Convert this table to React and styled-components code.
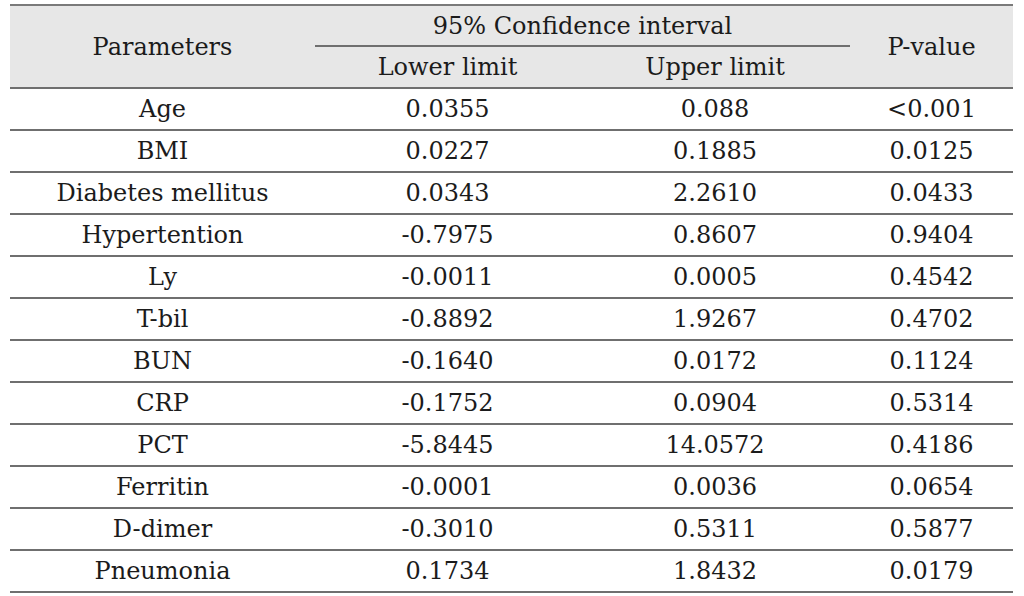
import styled, { createGlobalStyle } from "styled-components";

const GlobalStyle = createGlobalStyle`
  html, body {
    margin: 0;
    padding: 0;
    background: #ffffff;
  }
`;

const Page = styled.div`
  padding: 4px 11px 0 10px;
  font-family: "DejaVu Serif", "Liberation Serif", serif;
  color: #1b1b1b;
`;

const Table = styled.table`
  width: 1003px;
  border-collapse: collapse;
  table-layout: fixed;
  border-top: 2px solid #7a7a7a;
`;

const Head = styled.thead`
  background: #e7e7e7;
  border-bottom: 2px solid #6f6f6f;
`;

const HeadCell = styled.th`
  font-weight: normal;
  font-size: 24px;
  text-align: center;
  padding: 0;
  height: ${(p) => p.$h || 40}px;
  vertical-align: middle;
  border-bottom: ${(p) => (p.$rule ? "2px solid #6f6f6f" : "none")};
`;

const Row = styled.tr`
  border-bottom: 2px solid #6f6f6f;
`;

const Cell = styled.td`
  font-size: 24px;
  text-align: center;
  padding: 0;
  height: 40px;
  vertical-align: middle;
`;

const rows = [
  ["Age", "0.0355", "0.088", "<0.001"],
  ["BMI", "0.0227", "0.1885", "0.0125"],
  ["Diabetes mellitus", "0.0343", "2.2610", "0.0433"],
  ["Hypertention", "-0.7975", "0.8607", "0.9404"],
  ["Ly", "-0.0011", "0.0005", "0.4542"],
  ["T-bil", "-0.8892", "1.9267", "0.4702"],
  ["BUN", "-0.1640", "0.0172", "0.1124"],
  ["CRP", "-0.1752", "0.0904", "0.5314"],
  ["PCT", "-5.8445", "14.0572", "0.4186"],
  ["Ferritin", "-0.0001", "0.0036", "0.0654"],
  ["D-dimer", "-0.3010", "0.5311", "0.5877"],
  ["Pneumonia", "0.1734", "1.8432", "0.0179"],
];

const App = () => {
  return (
    <Page>
      <GlobalStyle />
      <Table>
        <colgroup>
          <col style={{ width: 305 }} />
          <col style={{ width: 265 }} />
          <col style={{ width: 270 }} />
          <col style={{ width: 163 }} />
        </colgroup>
        <Head>
          <tr>
            <HeadCell rowSpan={2}>Parameters</HeadCell>
            <HeadCell colSpan={2} $rule $h={39}>
              95% Confidence interval
            </HeadCell>
            <HeadCell rowSpan={2}>P-value</HeadCell>
          </tr>
          <tr>
            <HeadCell $h={40}>Lower limit</HeadCell>
            <HeadCell $h={40}>Upper limit</HeadCell>
          </tr>
        </Head>
        <tbody>
          {rows.map((r) => (
            <Row key={r[0]}>
              {r.map((v, i) => (
                <Cell key={i}>{v}</Cell>
              ))}
            </Row>
          ))}
        </tbody>
      </Table>
    </Page>
  );
};

export default App;
